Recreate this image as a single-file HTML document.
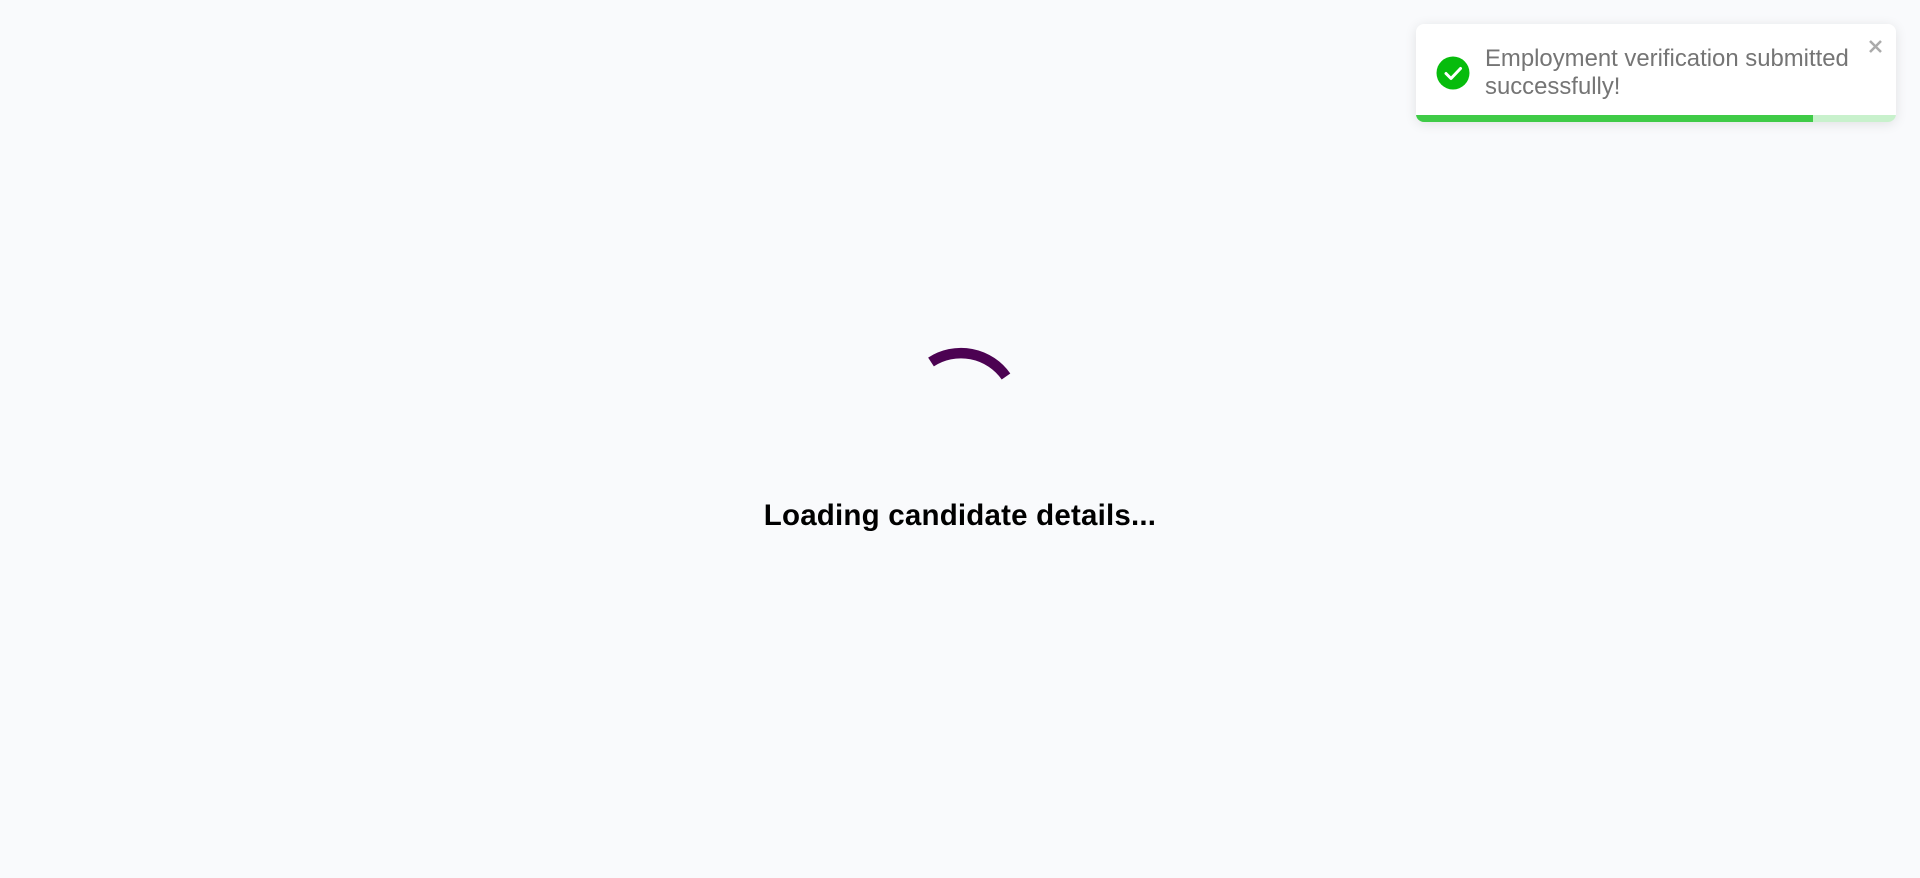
<!DOCTYPE html>
<html><head><meta charset="utf-8"><style>
html,body{margin:0;padding:0;width:1920px;height:878px;background:#f9fafc;overflow:hidden;font-family:"Liberation Sans",sans-serif}
.toast{position:absolute;left:1416px;top:24px;width:480px;height:98px;background:#fff;border-radius:8px;box-shadow:0 2px 12px rgba(0,0,0,.1);overflow:hidden}
.msg{position:absolute;left:69px;top:21px;font-size:23.9px;line-height:28px;color:#757575;width:390px}
.bar{position:absolute;left:0;bottom:0;height:7px;width:100%;background:#c8f1cc}
.bar i{position:absolute;left:0;top:0;height:7px;width:397px;background:#3fcb47}
.txt{position:absolute;left:0;width:1920px;text-align:center;top:499px;font-size:29.5px;font-weight:bold;color:#000;letter-spacing:0.2px}
</style></head><body>
<svg style="position:absolute;left:0;top:0" width="1920" height="878">
<path d="M931 362 A55 55 0 0 1 1006 376.5" fill="none" stroke="#4c0252" stroke-width="10.5"/>
</svg>
<div class="txt">Loading candidate details...</div>
<div class="toast">
<svg style="position:absolute;left:20px;top:32px" width="34" height="34" viewBox="0 0 34 34"><circle cx="17" cy="17" r="16.5" fill="#07bc0c"/><path d="M10 17.5 L15 22.5 L24.5 12.5" fill="none" stroke="#fff" stroke-width="3" stroke-linecap="round" stroke-linejoin="round"/></svg>
<div class="msg">Employment verification submitted successfully!</div>
<svg style="position:absolute;left:452px;top:15px" width="15" height="15" viewBox="0 0 15 15"><path d="M2 2 L13 13 M13 2 L2 13" stroke="#aaa" stroke-width="2.5"/></svg>
<div class="bar"><i></i></div>
</div>
</body></html>
